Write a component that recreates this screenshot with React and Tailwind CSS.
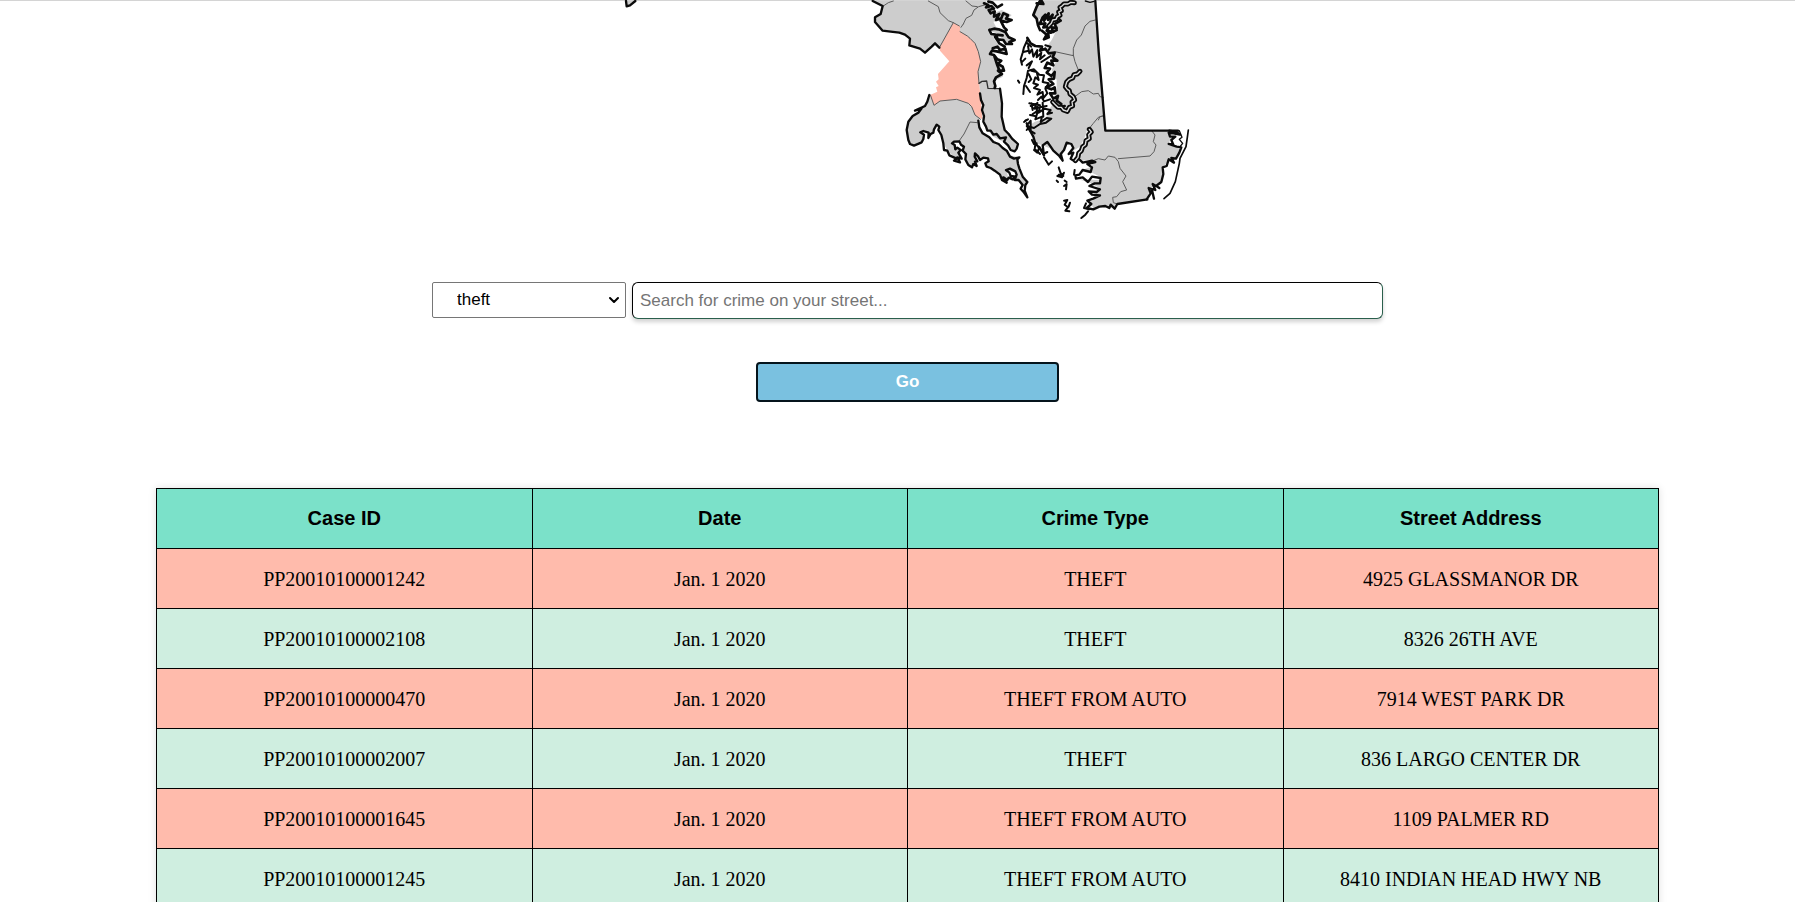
import { ChevronDown } from 'lucide-react';

const rows = [
  ['PP20010100001242', 'Jan. 1 2020', 'THEFT', '4925 GLASSMANOR DR'],
  ['PP20010100002108', 'Jan. 1 2020', 'THEFT', '8326 26TH AVE'],
  ['PP20010100000470', 'Jan. 1 2020', 'THEFT FROM AUTO', '7914 WEST PARK DR'],
  ['PP20010100002007', 'Jan. 1 2020', 'THEFT', '836 LARGO CENTER DR'],
  ['PP20010100001645', 'Jan. 1 2020', 'THEFT FROM AUTO', '1109 PALMER RD'],
  ['PP20010100001245', 'Jan. 1 2020', 'THEFT FROM AUTO', '8410 INDIAN HEAD HWY NB'],
];

const headings = ['Case ID', 'Date', 'Crime Type', 'Street Address'];

const rivers = [
  'M643 8 632 7 624 12 612 12 606 18 600 22 604 32 596 36 600 46 592 50 588 58 578 60 574 70 566 78',
  'M660 214 652 222 642 224 638 234 628 238 620 246 616 260 622 268 628 272 630 282 640 290 644 300 636 306 638 318 628 322 622 334 610 330 604 322 594 322 586 314 578 306',
  'M688 388 694 396 686 404 688 416 678 422 676 434 668 440 664 452 656 460 654 472 646 482',
];

function CountyMap() {
  return (
    <svg
      viewBox="-780 0 1800 660"
      className="w-[600px] h-[220px] shrink-0"
      role="img"
      aria-label="Map of Maryland counties"
      fill="none"
      strokeLinejoin="round"
      strokeLinecap="round"
    >
      {/* land */}
      <g fill="#cdcdcd">
        <path d="M40 3 68 18 62 42 45 52 45 66 68 92 118 98 150 116 150 138 180 148 195 157 225 130 238 143 300 190 357 250 380 243 385 265 402 264 408 240 428 230 430 200 412 180 395 158 400 140 428 150 405 120 388 92 410 100 440 130 462 122 430 92 410 85 400 65 440 60 455 45 425 30 400 40 385 20 378 3Z" />
        <path d="M357 250 380 243 385 265 420 266 425 300 423 350 435 385 450 405 474 430 472 445 462 453 445 438 430 425 400 410 378 385 372 350 360 285Z" />
        <path d="M212 285 195 320 165 340 148 362 140 390 145 420 160 437 185 427 190 417 182 395 205 400 205 412 220 395 232 375 238 390 250 430 265 455 300 485 300 455 280 430 295 425 310 440 315 470 330 497 345 490 350 465 360 480 382 475 380 492 372 498 400 508 425 530 425 545 445 535 440 512 465 515 470 540 490 560 498 545 480 510 470 470 445 465 430 440 400 420 370 400 355 368 362 350 335 312 290 298 240 303 222 316Z" />
        <path d="M540 3 520 45 532 62 548 50 570 45 590 60 590 90 575 120 560 140 570 165 590 180 575 210 590 240 590 280 580 310 560 340 560 355 525 365 500 380 515 405 530 430 570 445 605 480 610 455 625 430 640 440 635 455 660 440 675 410 682 388 695 385 692 405 670 440 660 482 700 480 695 500 665 510 690 515 720 530 715 540 655 538 690 548 725 568 700 575 720 590 690 605 700 625 730 618 760 625 770 610 862 598 870 565 905 545 910 500 930 478 950 475 965 450 925 430 935 415 930 395 955 392 738 392 706 3Z" />
      </g>

      {/* highlighted county */}
      <path
        fill="#ffbbac"
        d="M280 68 300 78 300 95 322 108 345 130 355 155 362 185 354 215 357 250 362 290 367 358 345 345 335 320 325 310 290 298 240 303 222 316 210 285 232 275 228 262 236 258 228 245 236 238 234 222 268 184 240 152 238 143Z"
      />

      {/* inland county borders */}
      <g stroke="#5c5c5c" strokeWidth="3">
        <path d="M70 18 85 8 100 3M205 3 235 20 240 38 265 62 280 68 298 78M238 143 280 68M300 95 322 108 330 115 345 130 355 155 362 185 354 215 357 250M310 72 318 55 335 46 342 30 356 20 374 15M310 72 303 82M318 3 336 18 352 20M212 287 222 316 240 303 270 300 290 298 325 310 335 320 345 345 362 358M298 422 312 402 330 366 352 368" />
        <path d="M706 60 690 64 675 78 664 105 650 120 640 145 640 165M585 155 640 167M640 165 645 185 655 210M647 288 665 275 685 272 700 282 715 280 720 290 730 292M730 347 715 352 700 370 688 385M875 392 885 405 880 425 888 435 882 455 870 468 775 476M700 482 715 476 735 480 745 468 765 472 775 485 780 505 798 528 788 545 800 570 782 575 770 590 758 592 760 608 772 612M715 360 720 350 730 348" />
      </g>
      <path stroke="#303030" strokeWidth="4" d="M357 250 366 244 380 243 384 265 420 266" />

      {/* shoreline, western side */}
      <g stroke="#0b0b0b" strokeWidth="7">
        <path d="M38 3 68 18 62 42 45 52 45 66 68 92 92 95 118 98 135 104 150 116 148 136 180 146 195 158 215 140 225 130 238 143" />
        <path d="M208 285 202 305 195 318 180 325 165 332 185 325 175 338 158 348 145 365 140 390 145 420 150 432 162 437 185 427 190 417 192 404 181 397 190 393 206 398 205 414 212 402 220 398 222 388 230 374 238 380 235 390 244 405 250 430 252 450 262 452 268 466 290 476 282 482 300 487 292 472 305 476 295 458 302 450 292 443 286 448 284 435 276 430 282 425 298 424 303 434 312 440 308 452 318 462 316 478 325 495 336 502 340 492 350 498 345 485 352 484 344 470 345 460 355 470 360 480 370 473 384 475 386 484 376 490 380 500 392 504 404 512 420 524 426 540 440 548 430 532 442 540 446 533 458 538 468 530 452 528 448 518 438 510 450 506 466 514 470 524 464 540 476 540 488 555 482 566 490 575 502 592 494 572 496 555 502 546 488 530 478 505 474 492 472 478 478 472 462 476 450 470 440 452 428 444 416 432 400 426 388 412 368 400 358 382 355 362" />
        <path d="M360 280 363 300 370 315 366 330 372 348 370 365 378 380 382 392 392 392 400 404 410 402 420 415 438 412 432 425 444 436 452 450 464 454 470 446 474 432 456 416 446 402 434 390 425 350 426 310 420 266" />
        <path strokeWidth="8" d="M372 10 385 15 378 22 394 18 402 26 386 30 392 40 404 34 402 50 418 42 408 60 424 55 430 40 444 46 438 56 455 60 440 66 422 62 432 82 440 90M385 5 398 8 412 22 426 14M388 90 402 86 416 88 436 96 446 112 464 120 448 126 456 132 438 132 430 120 414 118 406 104 394 102 388 90M406 104 428 106M398 145 412 140 420 150 436 146 440 162 426 158 410 154 396 152 390 162 402 165 412 178 424 182 414 192 428 200 432 212 414 212 426 222 408 232 402 244 406 258 404 264M402 165 412 196 420 216M405 110 418 130 434 140" />
      </g>

      {/* shoreline, eastern side */}
      <g stroke="#0b0b0b" strokeWidth="8">
        <path d="M540 3 530 20 520 45 530 56 534 76 540 90M530 10 550 12 545 3M540 70 548 52 556 44 552 62 566 40 564 60 578 44 572 66 590 50 602 62 584 72 590 84 574 82 580 96 560 92 568 80 550 82 556 70 540 72M546 92 560 104 552 118 566 112 564 96M572 98 590 90" />
        <path d="M502 114 512 130 526 138 546 140 540 152 556 146 566 160 584 158 578 172 592 182 574 182 580 196 562 188 554 204 570 206 560 218 574 228 584 216 582 236 566 238 580 252 558 262 574 268 584 262 586 280 570 280 580 296 594 288 590 302 604 312 598 322 614 318" />
        <path d="M502 120 492 142 488 158 482 178 486 194M504 138 508 160 516 148 520 170 532 150 530 172 544 158 540 178 554 166M490 156 506 152M500 128 514 140M556 136 572 140 566 150M544 186 560 176 572 168M496 176 484 188M500 196 516 184 506 204M514 212 530 216 536 240 526 232 520 250 534 254 522 264 540 270 532 284 548 276 550 294 562 280 556 266 566 250 548 246 552 226 538 224 522 208 504 212 500 234 492 258 490 282M506 222 514 238 506 246M474 242 478 248M498 258 510 276M534 300 544 290 552 304 570 298M512 318 528 312 524 326 540 322 536 338 554 326 572 330 562 342 576 338M518 342 534 332 526 358 546 350 542 366 560 354 574 356 558 368 540 372 522 384 508 380 500 390M500 360 492 366M510 345 525 348M548 308 550 350M520 325 560 318" strokeWidth="6" />
        <path d="M500 370 510 392 520 410 526 430 540 446 552 466 548 436 562 426 572 440 580 452 598 468 608 482 602 462 612 450 620 428 634 432 640 444 626 462 640 458 632 476 644 484M660 480 668 488 696 482 706 486 682 492 696 502 692 516 668 510 658 524 646 526 648 536 668 532 684 546 696 530 722 534 720 550 704 550 688 558 720 568 710 576 686 574 696 584 720 586 700 596 682 602 694 612 680 624 700 628 718 620 736 618 748 624 752 614 764 626 772 612 862 598" strokeWidth="7" />
        <path d="M526 432 524 448 534 454 538 440 550 462 562 456M552 472 566 494 576 484M596 502 602 520 610 524M592 528 606 532 612 518M596 524 610 528M590 542 594 546M614 542 620 546M612 558 620 552 618 568M612 602 622 600 614 614 624 622 616 632 628 634M630 608 626 620M684 634 676 644 664 654M678 610 672 624 688 628M644 510 642 524" strokeWidth="6" />
        <path d="M928 392 950 396 960 404 940 400 926 398 930 410 946 410 934 420 940 434 926 432 950 440 964 442 958 458 948 476 934 474 942 488 926 478 920 498 908 502 910 522 904 546 888 558 878 552 886 570 866 564 872 580 860 598M876 570 882 596M892 560 898 564" strokeWidth="7" />
        <path d="M985 390 982 412 978 440 960 475 958 490 946 545 930 580 912 596" strokeWidth="5" />
        <path d="M958 392 966 412 958 418 968 430 960 440" strokeWidth="4" />
        <path d="M706 3 716 155 725 260 736 392 954 392" strokeWidth="7" />
        <path d="M676 3 690 7 702 4" strokeWidth="4" />
      </g>

      {/* rivers: dark banks with open water between */}
      <g stroke="#0b0b0b" strokeWidth="15">
        {rivers.map((d) => <path key={d} d={d} />)}
      </g>
      <g stroke="#dedede" strokeWidth="4">
        {rivers.map((d) => <path key={d} d={d} />)}
      </g>

      {/* bay islands */}
      <g stroke="#0b0b0b" strokeWidth="6">
        <path d="M508 310 540 316M514 310 518 330M532 308 530 340M496 362 504 358M504 372 512 362 512 394 500 378M514 394 524 400M516 420 522 432 530 430M522 450 532 458M534 456 540 462" />
      </g>

      {/* tip of the western panhandle */}
      <path stroke="#0b0b0b" strokeWidth="7" fill="#cdcdcd" d="M-702 3-700 19-690 16-674 3" />
    </svg>
  );
}

export default function App() {
  return (
    <main className="min-h-screen bg-white border-t border-[#d4d4d4] pl-[156px] pr-[136px] text-black">
      <div className="-mt-px flex">
        <div className="w-[444px] shrink" />
        <CountyMap />
      </div>

      <form className="mt-[62px] flex flex-col items-center" onSubmit={(e) => e.preventDefault()}>
        <div className="flex w-full max-w-[951px] items-start gap-1.5 font-['Liberation_Sans',Arial,sans-serif] text-[17px]">
          <div className="relative w-[194px] shrink-0">
            <select
              aria-label="Crime type"
              defaultValue="theft"
              className="h-9 w-full appearance-none rounded-xs border border-[#767676] bg-white pl-6"
            >
              <option value="theft">theft</option>
            </select>
            <ChevronDown
              className="pointer-events-none absolute right-1 top-2.5 size-4"
              strokeWidth={3}
              aria-hidden="true"
            />
          </div>
          <input
            aria-label="Street"
            type="text"
            placeholder="Search for crime on your street..."
            className="h-[37px] min-w-0 flex-1 rounded-md border border-t-black border-l-black border-r-[#2a5f4c] border-b-[#2a5f4c] bg-white px-[7px] shadow-[0_3px_4px_rgba(0,0,0,0.18)] placeholder:text-[#757575]"
          />
        </div>
        <button
          type="submit"
          className="mt-[43px] h-10 w-[303px] max-w-full rounded-sm border-2 border-[#05141c] bg-[#7ac1e0] font-['Liberation_Sans',Arial,sans-serif] text-[17px] font-bold text-white"
        >
          Go
        </button>
      </form>

      <table className="mt-[86px] w-full table-fixed border-collapse text-center text-xl shadow-[0_0_8px_rgba(0,0,0,0.12)]">
        <thead>
          <tr className="h-15 bg-[#7be1c9] font-['Liberation_Sans',Arial,sans-serif]">
            {headings.map((h) => (
              <th key={h} scope="col" className="border border-black p-0 pb-0.5 font-bold">{h}</th>
            ))}
          </tr>
        </thead>
        <tbody className="font-['Liberation_Serif','Times_New_Roman',serif]">
          {rows.map((row) => (
            <tr key={row[0]} className="h-15 odd:bg-[#ffbbac] even:bg-[#cfeee0]">
              {row.map((cell, i) => (
                <td key={i} className="border border-black p-0">{cell}</td>
              ))}
            </tr>
          ))}
        </tbody>
      </table>
    </main>
  );
}
